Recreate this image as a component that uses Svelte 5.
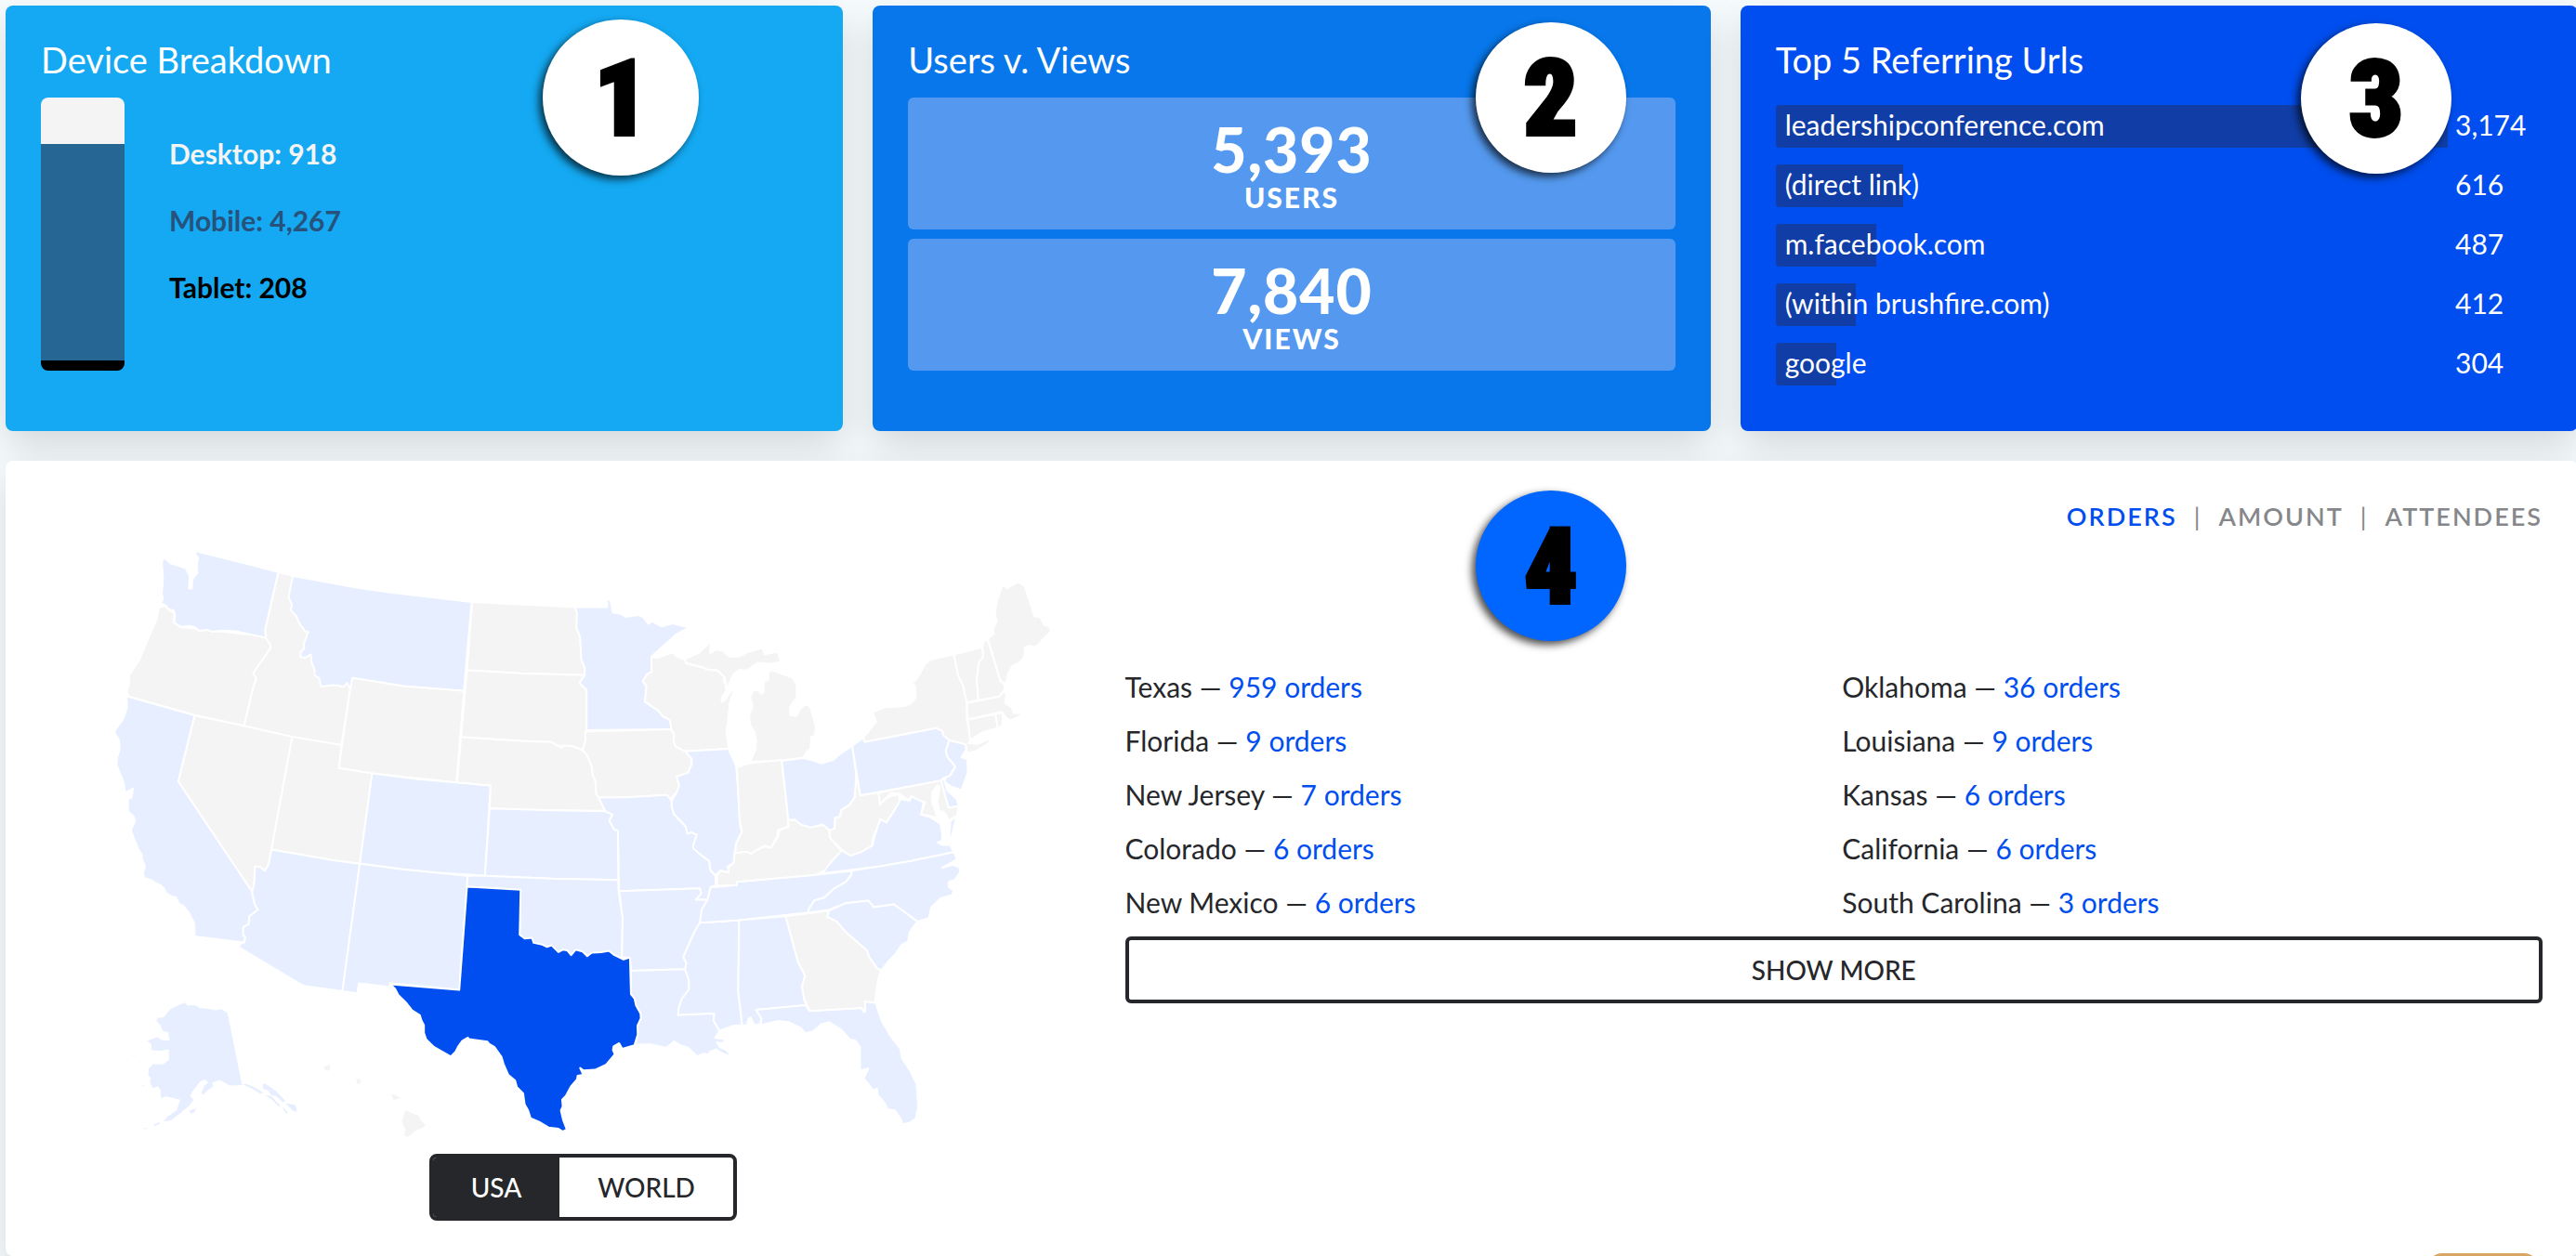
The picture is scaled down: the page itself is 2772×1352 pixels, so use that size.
<script>
    const devices = [
        { name: 'Desktop', label: '918', count: 918, color: '#f4f4f4' },
        { name: 'Mobile', label: '4,267', count: 4267, color: '#266694' },
        { name: 'Tablet', label: '208', count: 208, color: '#000000' },
    ];

    const totals = [
        { value: '5,393', label: 'Users' },
        { value: '7,840', label: 'Views' },
    ];

    const referrers = [
        { url: 'leadershipconference.com', views: '3,174', percent: 100 },
        { url: '(direct link)', views: '616', percent: 19 },
        { url: 'm.facebook.com', views: '487', percent: 15 },
        { url: '(within brushfire.com)', views: '412', percent: 12 },
        { url: 'google', views: '304', percent: 9 },
    ];

    const orders = [
        ['Texas', 959],
        ['Oklahoma', 36],
        ['Florida', 9],
        ['Louisiana', 9],
        ['New Jersey', 7],
        ['Kansas', 6],
        ['Colorado', 6],
        ['California', 6],
        ['New Mexico', 6],
        ['South Carolina', 3],
    ];

    const metrics = ['Orders', 'Amount', 'Attendees'];
    let metric = $state('Orders');

    const regions = ['USA', 'World'];
    let region = $state('USA');

    // The map is split in sheets, each with its own origin.
    // A state that is drawn later covers the edge of its neighbours.
    const sheets = [
        {
            name: 'west', x: 300, y: 1680,
            states: [
                ['OR', '', 'M212,283 232,275 245,290 262,300 262,330 285,345 558,375 575,408 552,445 535,467 517,495 528,510 517,540 488,663 328,629 112,567 111,545 118,520 116,502 150,450 182,372 205,320Z'],
                ['ID', '', 'M598,167 645,180 700,350 720,430 760,500 830,520 830,545 802,725 643,699 488,663 517,540 528,510 517,495 535,467 552,445 575,408 558,379 555,355Z'],
                ['WA', 'some', 'M331,100 450,129 598,167 555,355 558,379 460,358 420,356 385,360 370,354 342,357 328,345 308,341 285,345 262,330 265,305 260,291 245,288 235,275 218,267 226,255 222,235 226,190 222,135 229,120 250,138 300,155 312,180 310,220 319,220 321,190 337,170 335,150 339,122 329,108Z'],
                ['MT', 'some', 'M645,180 860,219 960,233 1222,264 1197,551 1000,535 838,509 830,545 820,525 808,538 790,533 770,532 750,535 736,537 730,510 715,500 715,483 706,460 703,433 682,445 670,440 670,425 682,415 680,400 695,360 684,358 668,335 655,308 638,290 642,272 631,248Z'],
                ['WY', '', 'M838,509 1000,535 1197,551 1173,846 900,817 793,800 830,545Z'],
                ['NV', '', 'M328,630 488,664 643,699 576,1063 567,1110 555,1132 540,1120 523,1118 518,1198 513,1198 275,843Z'],
                ['UT', '', 'M643,699 802,726 793,800 901,817 861,1109 780,1098 576,1063Z'],
                ['CO', 'some', 'M901,817 1050,836 1173,846 1283,856 1265,1147 1100,1137 1000,1127 861,1109Z'],
                ['CA', 'some', 'M110,568 328,630 275,843 513,1198 523,1242 533,1257 505,1278 502,1305 485,1313 485,1340 492,1345 488,1363 328,1343 326,1300 310,1268 290,1243 278,1240 268,1217 255,1215 235,1203 230,1190 218,1178 200,1170 185,1160 165,1155 162,1140 168,1115 158,1095 158,1080 145,1060 122,1000 136,970 130,955 113,940 113,900 125,895 129,865 105,880 98,845 76,790 78,765 86,740 84,710 68,682 98,640 110,605 108,575Z'],
                ['AZ', 'some', 'M576,1063 780,1098 861,1109 805,1520 680,1503 470,1378 478,1365 488,1363 492,1345 485,1340 485,1313 502,1305 505,1278 533,1257 523,1242 513,1200 520,1175 523,1118 540,1120 555,1132 567,1110Z'],
                ['NM', 'some', 'M861,1109 1000,1127 1209,1148 1182,1516 958,1494 960,1507 858,1495 853,1527 805,1520Z'],
            ],
        },
        {
            name: 'central', x: 1380, y: 1680,
            states: [
                ['ND', '', 'M144,264 476,280 482,300 480,345 492,378 496,450 507,475 507,500 300,494 127,484Z'],
                ['SD', '', 'M127,484 300,494 507,500 490,525 513,548 513,677 508,682 510,708 500,742 470,730 430,733 400,716 300,712 108,700Z'],
                ['NE', '', 'M108,700 300,712 400,716 432,734 437,727 470,730 500,742 515,760 530,795 533,825 541,840 544,885 552,895 573,938 400,936 200,930 203,856 95,846Z'],
                ['KS', 'some', 'M200,930 400,936 573,939 597,950 586,970 602,998 614,1002 615,1161 400,1157 185,1148Z'],
                ['OK', 'some', 'M129,1147 185,1148 400,1157 615,1161 616,1198 629,1282 627,1410 560,1420 295,1380 300,1193 127,1183Z'],
                ['MN', 'some', 'M476,280 579,280 579,252 590,258 598,298 625,303 640,312 680,306 695,312 713,335 722,325 755,343 790,333 843,346 800,370 722,440 723,490 708,497 694,520 706,535 701,585 722,600 745,615 758,632 782,645 787,675 513,678 513,548 490,525 507,500 507,475 496,450 492,378 480,345 482,300Z'],
                ['IA', '', 'M508,682 787,675 796,695 793,712 800,730 832,746 852,770 852,788 840,815 803,828 812,855 803,880 789,893 787,905 772,887 640,894 552,895 544,885 541,840 533,825 530,795 515,760 500,742 510,708Z'],
                ['WI', '', 'M722,442 745,443 793,425 800,437 830,450 835,462 880,472 908,483 935,484 957,505 955,520 965,530 960,540 967,545 948,575 950,586 962,578 975,555 992,540 975,590 970,640 964,680 972,737 832,746 800,730 793,712 796,695 787,675 782,645 758,632 745,615 722,600 701,585 706,535 694,520 708,497 723,490Z'],
                ['MI', '', 'M830,448 875,428 900,405 927,379 912,405 912,430 930,417 950,420 975,440 1003,440 1030,427 1080,412 1088,432 1130,425 1140,457 1110,463 1065,460 1030,485 1005,483 985,500 967,545 957,505 935,484 908,483 880,472 835,462Z'],
                ['IL', 'some', 'M832,746 972,738 975,750 990,780 996,798 1009,965 1008,985 1014,1005 995,1045 990,1080 988,1105 968,1118 972,1137 945,1130 928,1147 912,1130 908,1100 885,1083 857,1060 857,1048 868,1015 850,1008 838,1012 832,988 795,950 787,925 787,905 803,880 812,855 803,828 840,815 852,788 852,770Z'],
                ['MO', 'some', 'M552,895 640,894 772,887 787,905 787,925 795,950 832,988 838,1012 850,1008 868,1015 857,1048 857,1060 885,1083 908,1100 912,1130 928,1147 930,1180 913,1183 903,1225 865,1225 883,1205 878,1188 618,1197 614,1002 602,998 586,970 597,950 573,939Z'],
                ['AR', 'some', 'M618,1197 878,1188 883,1205 865,1225 903,1225 895,1250 885,1270 880,1300 860,1330 838,1380 825,1410 835,1430 831,1449 656,1454 653,1415 627,1410 629,1282Z'],
                ['LA', 'some', 'M656,1454 831,1449 843,1485 843,1515 820,1545 808,1597 925,1592 922,1615 942,1648 928,1670 958,1675 955,1688 933,1685 942,1700 965,1710 975,1722 972,1730 950,1720 930,1708 912,1715 905,1725 890,1722 870,1731 840,1702 815,1695 795,1682 770,1703 720,1692 670,1693 678,1660 677,1632 688,1608 687,1592 672,1565 668,1545 656,1530Z'],
                ['MS', 'some', 'M878,1299 1005,1291 1002,1520 1015,1630 985,1632 942,1648 922,1615 925,1592 808,1597 810,1575 820,1545 843,1515 843,1485 831,1449 835,1430 825,1410 838,1380 860,1330Z'],
                ['TX', 'most', 'M127,1183 300,1193 297,1338 313,1350 337,1348 342,1364 370,1370 385,1377 400,1372 422,1394 437,1386 450,1388 463,1404 478,1386 500,1392 515,1407 530,1396 560,1394 585,1390 600,1402 632,1418 650,1412 653,1415 656,1530 668,1545 672,1565 687,1592 688,1608 677,1632 678,1660 667,1695 628,1706 618,1688 600,1698 598,1710 604,1724 575,1758 540,1774 503,1776 492,1768 502,1790 484,1793 482,1805 462,1828 446,1858 434,1870 436,1892 430,1905 437,1935 449,1967 436,1973 422,1964 390,1960 360,1942 332,1930 324,1905 313,1885 308,1850 288,1830 282,1808 260,1790 245,1755 238,1732 215,1700 198,1690 193,1683 133,1675 130,1670 112,1680 98,1700 90,1716 75,1731 20,1700 -5,1675 -12,1655 -12,1630 -20,1615 -25,1598 -50,1582 -70,1557 -95,1532 -105,1513 -120,1498 102,1516Z'],
            ],
        },
        {
            name: 'north east', x: 2340, y: 1740,
            states: [
                ['MI', '', 'M80,720 98,680 100,650 95,625 80,600 77,570 88,540 80,510 90,490 108,487 115,500 123,495 125,460 140,455 138,430 150,423 180,435 218,448 231,470 231,510 208,545 210,568 228,573 245,545 262,533 275,545 293,605 290,635 278,640 275,680 265,685 250,707 183,715Z'],
                ['IN', '', 'M38,738 78,724 182,714 204,907 202,930 170,940 168,960 148,997 128,990 105,1005 83,1017 70,1010 33,1015 35,985 54,945 46,905Z'],
                ['OH', 'some', 'M183,717 250,708 285,715 312,725 350,713 370,695 410,668 422,755 420,830 400,860 375,875 370,897 355,900 353,935 338,942 315,922 275,935 245,925 225,907 204,908Z'],
                ['NY', '', 'M447,640 488,590 475,560 510,545 580,540 600,530 615,512 612,475 602,465 620,450 645,405 662,390 738,373 752,440 768,475 780,530 780,583 793,645 785,660 815,662 863,642 850,660 810,685 780,692 776,664 723,650 705,635 700,620 682,611 450,656Z'],
                ['PA', 'some', 'M410,668 445,642 450,656 682,611 700,620 705,635 723,650 712,685 718,705 743,735 725,765 705,772 697,780 436,828Z'],
                ['VT', '', 'M738,373 830,350 833,380 818,400 812,455 817,521 780,530 768,475 752,440Z'],
                ['NH', '', 'M830,350 835,330 847,327 888,458 903,472 900,490 883,510 817,521 812,455 818,400 833,380Z'],
                ['ME', '', 'M848,323 868,305 863,295 876,265 870,240 877,200 896,146 908,160 945,140 967,152 998,250 1015,252 1030,278 1045,282 1053,297 1030,320 1010,340 1000,350 985,345 967,350 965,380 950,400 928,410 915,430 905,470 888,458Z'],
                ['MA', '', 'M780,530 883,510 900,490 907,500 904,530 925,545 930,562 965,562 940,578 918,587 905,575 892,558 783,583Z'],
                ['CT', '', 'M783,583 872,566 880,610 830,625 790,650Z'],
                ['RI', '', 'M872,566 892,560 897,575 893,605 880,610Z'],
                ['VA', 'some', 'M562,840 595,845 600,830 640,850 632,890 665,900 695,920 700,950 700,975 686,980 700,988 726,988 738,1011 600,1040 500,1057 310,1080 345,1040 375,1005 405,1023 440,1010 475,990 488,940 500,905 520,915 540,885ZM747,897 738,930 730,965 723,960 727,910Z'],
                ['WV', '', 'M425,770 436,828 495,819 500,855 520,835 560,825 562,850 540,885 520,915 500,905 488,940 475,970 475,990 440,1010 405,1023 375,1003 338,965 336,942 353,935 355,900 370,897 375,875 400,860 418,835 422,790Z'],
                ['MD', '', 'M495,819 697,780 721,868 753,863 748,895 722,907 705,880 690,880 685,850 692,800 685,795 668,820 668,850 685,900 650,892 632,890 645,850 625,843 600,830 595,845 560,822 535,820 500,857Z'],
                ['DE', 'some', 'M697,780 708,775 715,810 748,840 753,862 721,868Z'],
                ['NJ', 'some', 'M723,650 776,664 778,680 763,705 782,712 783,755 762,812 730,800 708,785 712,770 725,765 743,735 718,705 712,685Z'],
            ],
        },
        {
            name: 'south east', x: 2220, y: 2550,
            states: [
                ['TN', 'some', 'M73,315 158,308 158,297 410,275 528,262 527,275 510,297 470,320 440,348 408,357 390,385 388,396 165,421 38,429 45,385 63,355Z'],
                ['KY', '', 'M93,310 95,275 105,262 132,267 130,250 148,235 150,205 190,200 203,207 225,193 245,183 268,187 292,150 295,130 325,120 322,98 345,97 365,113 395,122 435,113 455,130 458,155 495,197 460,235 440,262 410,275 240,290 158,297 158,308Z'],
                ['NC', 'some', 'M528,261 620,247 720,230 858,201 868,225 820,252 855,242 875,250 879,265 862,290 842,297 842,315 858,325 852,340 815,350 785,380 777,415 740,425 665,370 600,379 582,358 510,366 455,388 388,396 390,385 408,357 440,348 470,320 510,297 527,275Z'],
                ['AL', 'some', 'M165,421 315,408 355,555 378,600 368,635 375,675 382,695 220,710 237,738 232,757 213,760 203,735 195,740 190,760 175,761 162,650Z'],
                ['FL', 'some', 'M220,710 380,695 392,714 560,704 568,718 573,683 606,688 625,745 655,797 685,835 690,865 720,912 738,950 743,1025 735,1062 715,1075 692,1080 688,1065 668,1035 645,1032 630,1005 612,985 610,965 598,970 567,932 582,900 555,907 555,830 540,810 522,805 495,775 455,750 430,757 405,780 378,786 365,770 325,750 290,746 235,760 237,738Z'],
                ['GA', '', 'M315,408 455,390 450,410 480,425 510,460 545,490 578,518 585,540 612,578 622,583 612,620 603,687 572,683 572,717 560,704 392,714 375,675 368,635 378,600 355,555Z'],
                ['SC', 'some', 'M455,390 510,366 582,358 600,379 665,370 740,425 715,460 710,490 690,500 670,530 645,555 625,582 612,578 585,540 578,518 545,490 510,460 480,425 450,410Z'],
            ],
        },
        {
            name: 'islands', x: 300, y: 2700,
            states: [
                ['AK', 'some', 'M298,537 305,547 330,545 345,555 365,556 395,562 415,558 434,570 481,803 440,805 425,795 408,787 385,795 388,808 370,820 355,835 350,828 360,805 372,795 360,785 345,793 320,825 314,840 325,850 310,870 280,895 250,918 228,920 240,905 270,885 282,850 250,843 235,840 220,846 218,820 210,807 193,813 184,795 186,780 178,770 180,750 195,735 225,737 245,722 245,688 215,693 190,690 187,670 175,660 210,648 220,658 247,660 243,633 225,628 218,610 204,595 210,586 228,585 248,560 275,545Z'],
                ['AK', 'some', 'M481,800 497,800 520,810 550,828 540,831 515,815ZM548,800 556,799 590,822 622,855 612,858 590,838 575,835 565,820 548,815ZM555,835 575,838 590,855 605,870 600,873 575,848ZM622,862 650,866 657,876 657,890 645,886ZM610,873 620,880 630,895 622,893ZM312,885 335,878 325,893 315,895ZM195,932 213,922 216,928 200,935ZM162,946 170,941 178,943ZM157,802 168,803 162,806ZM120,703 130,707 142,717Z'],
                ['HI', '', 'M742,747 755,740 765,738 765,752 757,758ZM848,783 862,784 866,795 855,801ZM912,813 922,814 918,816ZM953,830 960,835 973,833 992,845 970,852 966,840ZM1008,885 1052,903 1058,917 1073,933 1062,942 1040,950 1018,970 1005,966 1007,945 997,922Z'],
            ],
        },
    ];
</script>

<main class="page">
    <div class="cards">
        <section class="card devices">
            <h2>Device Breakdown</h2>
            <div class="breakdown">
                <div class="stack">
                    {#each devices as device}
                        <div style="flex-grow: {device.count}; background: {device.color}"></div>
                    {/each}
                </div>
                <ul class="legend">
                    {#each devices as device}
                        <li class={device.name.toLowerCase()}>{device.name}: {device.label}</li>
                    {/each}
                </ul>
            </div>
            <span class="badge one">1</span>
        </section>

        <section class="card views">
            <h2>Users v. Views</h2>
            <div class="totals">
                {#each totals as total}
                    <div class="total">
                        <strong>{total.value}</strong>
                        <span>{total.label}</span>
                    </div>
                {/each}
            </div>
            <span class="badge two">2</span>
        </section>

        <section class="card urls">
            <h2>Top 5 Referring Urls</h2>
            <ol class="referrers">
                {#each referrers as referrer}
                    <li>
                        <div class="track">
                            <div class="bar" style="width: {referrer.percent}%">{referrer.url}</div>
                        </div>
                        <span>{referrer.views}</span>
                    </li>
                {/each}
            </ol>
            <span class="badge three">3</span>
        </section>
    </div>

    <section class="panel">
        <div class="map">
            <svg viewBox="132 1602 3498 2070" role="img" aria-label="Orders by state">
                {#each sheets as sheet}
                    <g class:islands={sheet.name == 'islands'} transform="translate({sheet.x} {sheet.y})">
                        {#each sheet.states as [code, level, d]}
                            <path class="state {level}" data-state={code} {d} />
                        {/each}
                    </g>
                {/each}
            </svg>
            <div class="switch">
                {#each regions as name}
                    <button class:active={region == name} onclick={() => region = name}>{name}</button>
                {/each}
            </div>
        </div>

        <div class="details">
            <nav class="metrics">
                {#each metrics as name}
                    <button class:active={metric == name} onclick={() => metric = name}>{name}</button>
                {/each}
            </nav>
            <ul class="orders">
                {#each orders as [state, count]}
                    <li>{state} — <a href="#orders">{count} orders</a></li>
                {/each}
            </ul>
            <button class="more">Show more</button>
        </div>
        <span class="badge four">4</span>
    </section>

    <button class="help" aria-label="Help"></button>
</main>

<style>
    :global(body) {
        margin: 0;
        overflow: hidden;
        background: #f6fbfe;
    }

    .page {
        /* the right edge of the cards runs just out of the window */
        margin: 6px -2px 0 6px;
        font-family: Lato, "Open Sans", sans-serif;
        font-size: 30px;
        line-height: 36px;
        color: #26272b;
    }

    h2, ul, ol {
        margin: 0;
        padding: 0;
        list-style: none;
    }

    button {
        font: inherit;
        font-size: 28px;
        font-weight: 500;
        text-transform: uppercase;
        color: inherit;
        background: none;
        border: none;
        padding: 0;
        cursor: pointer;
    }

    .cards {
        display: grid;
        grid-template-columns: repeat(3, 1fr);
        gap: 32px;
        margin-bottom: 32px;
    }

    .card {
        position: relative;
        box-sizing: border-box;
        min-height: 458px;
        padding: 34px 38px;
        color: #fff;
        border-radius: 8px;
        box-shadow: 0 16px 40px rgba(0, 0, 0, .14);
    }

    .devices { background: #14a9f2; }
    .views { background: #0777eb; }
    .urls { background: #004eef; }

    h2 {
        margin-bottom: 17px;
        font-size: 38px;
        line-height: 48px;
        font-weight: 400;
    }

    .breakdown {
        display: flex;
        gap: 48px;
        height: 294px;
    }

    .stack {
        display: flex;
        flex-direction: column;
        width: 90px;
        border-radius: 8px;
        overflow: hidden;
    }

    .legend {
        padding-top: 24px;
        line-height: 72px;
        font-weight: 700;
    }

    .desktop { color: #f4f4f4; }
    .mobile { color: #26527c; }
    .tablet { color: #000; }

    .totals {
        display: flex;
        flex-direction: column;
        gap: 10px;
    }

    .total {
        display: flex;
        flex-direction: column;
        align-items: center;
        justify-content: center;
        box-sizing: border-box;
        height: 142px;
        padding-top: 6px;
        font-weight: 900;
        background: #5499ef;
        border-radius: 6px;
    }

    .total strong {
        font-size: 66px;
        line-height: 66px;
        font-weight: 900;
        letter-spacing: 1px;
    }

    .total span {
        text-transform: uppercase;
        letter-spacing: 2px;
    }

    .referrers {
        display: flex;
        flex-direction: column;
        gap: 18px;
        padding-top: 8px;
    }

    .referrers li {
        display: grid;
        grid-template-columns: 1fr 102px;
        line-height: 42px;
    }

    .referrers span {
        padding-left: 8px;
    }

    .bar {
        box-sizing: border-box;
        height: 46px;
        padding-left: 10px;
        white-space: nowrap;
        background: #103ea6;
        border-radius: 4px 0 0 4px;
    }

    .badge {
        position: absolute;
        width: 162px;
        height: 162px;
        border-radius: 50%;
        background: #fff;
        color: #000;
        box-shadow: -4px 4px 8px rgba(0, 0, 0, .7);
        font-family: "Roboto Condensed", Roboto, sans-serif;
        font-size: 114px;
        line-height: 164px;
        font-weight: 900;
        text-align: center;
        -webkit-text-stroke: 4px #000;
    }

    .one {
        top: 15px;
        right: 155px;
        width: 168px;
        height: 168px;
        line-height: 170px;
    }

    .two {
        top: 18px;
        right: 91px;
    }

    .three {
        top: 19px;
        right: 136px;
    }

    .four {
        top: 32px;
        right: 1024px;
        background: #0066ff;
    }

    .panel {
        position: relative;
        display: grid;
        grid-template-columns: 13fr 17fr;
        padding: 38px;
        background: #fff;
        border-radius: 8px;
        box-shadow: 0 16px 40px rgba(0, 0, 0, .14);
    }

    .map {
        display: flex;
        flex-direction: column;
        align-items: center;
        gap: 18px;
    }

    svg {
        display: block;
        width: 100%;
    }

    .state {
        fill: #f4f4f4;
        stroke: #fff;
        stroke-width: 6;
        stroke-linejoin: round;
    }

    .state.some { fill: #e6eeff; }
    .state.most { fill: #004eef; }
    .islands .state { stroke: none; }

    .switch {
        display: flex;
        border: 4px solid #26272b;
        border-radius: 8px;
        overflow: hidden;
    }

    .switch button {
        height: 64px;
        padding: 0 41px;
    }

    .switch .active {
        color: #fff;
        background: #26272b;
    }

    .metrics {
        display: flex;
        justify-content: flex-end;
        margin-bottom: 132px;
    }

    .metrics button {
        font-size: 27px;
        line-height: 44px;
        font-weight: 600;
        letter-spacing: 2px;
        color: #86878a;
    }

    .metrics button + button::before {
        content: '|';
        padding: 0 18px;
        font-weight: 400;
    }

    .metrics .active {
        color: #004eef;
    }

    .orders {
        display: grid;
        grid-template-columns: 1fr 1fr;
        column-gap: 18px;
        margin-bottom: 8px;
        line-height: 58px;
    }

    a {
        color: #004eef;
        text-decoration: none;
    }

    .more {
        width: 100%;
        height: 72px;
        border: 4px solid #26272b;
        border-radius: 6px;
    }

    .help {
        position: fixed;
        right: 40px;
        bottom: -69px;
        width: 120px;
        height: 72px;
        background: #d9a562;
        border-radius: 16px;
    }
</style>
